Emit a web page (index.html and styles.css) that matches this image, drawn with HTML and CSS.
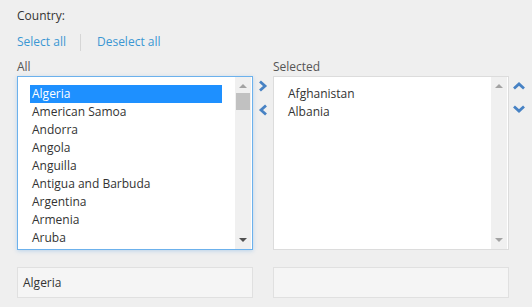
FILE: index.html
```html
<!DOCTYPE html>
<html lang="en">
<head>
    <meta charset="UTF-8">
    <meta name="viewport" content="width=device-width, initial-scale=1.0">
    <title>Country picker</title>
    <link rel="stylesheet" href="styles.css">
</head>
<body>
    <div class="field">
        <div class="field-label">Country:</div>
        <div class="bulk-links">
            <a href="#" class="link">Select all</a>
            <span class="divider"></span>
            <a href="#" class="link">Deselect all</a>
        </div>
        <div class="picker">
            <div class="pane">
                <div class="pane-label">All</div>
                <div class="listbox focused">
                    <ul class="options">
                        <li class="option selected">Algeria</li>
                        <li class="option">American Samoa</li>
                        <li class="option">Andorra</li>
                        <li class="option">Angola</li>
                        <li class="option">Anguilla</li>
                        <li class="option">Antigua and Barbuda</li>
                        <li class="option">Argentina</li>
                        <li class="option">Armenia</li>
                        <li class="option">Aruba</li>
                    </ul>
                    <div class="scrollbar">
                        <span class="arrow up"></span>
                        <span class="thumb"></span>
                        <span class="arrow down dark"></span>
                    </div>
                </div>
                <div class="summary">Algeria</div>
            </div>

            <div class="move-buttons">
                <button class="icon-btn" title="Add">
                    <svg width="10" height="12" viewBox="0 0 10 12"><path d="M2 1.5 L7 6 L2 10.5" fill="none" stroke="#4782c4" stroke-width="2.8"/></svg>
                </button>
                <button class="icon-btn" title="Remove">
                    <svg width="10" height="12" viewBox="0 0 10 12"><path d="M8 1.5 L3 6 L8 10.5" fill="none" stroke="#4782c4" stroke-width="2.8"/></svg>
                </button>
            </div>

            <div class="pane">
                <div class="pane-label">Selected</div>
                <div class="listbox">
                    <ul class="options">
                        <li class="option">Afghanistan</li>
                        <li class="option">Albania</li>
                    </ul>
                    <div class="scrollbar">
                        <span class="arrow up"></span>
                        <span class="arrow down"></span>
                    </div>
                </div>
                <div class="summary"></div>
            </div>

            <div class="order-buttons">
                <button class="icon-btn" title="Move up">
                    <svg width="12" height="8" viewBox="0 0 12 8"><path d="M1 6.5 L6 2 L11 6.5" fill="none" stroke="#4782c4" stroke-width="2.8"/></svg>
                </button>
                <button class="icon-btn" title="Move down">
                    <svg width="12" height="8" viewBox="0 0 12 8"><path d="M1 1.5 L6 6 L11 1.5" fill="none" stroke="#4782c4" stroke-width="2.8"/></svg>
                </button>
            </div>
        </div>
    </div>
</body>
</html>
```

FILE: styles.css
```css
body {
    font-family: "Open Sans", Arial, sans-serif;
    font-size: 12px;
    background-color: #efefef;
    color: #333;
    margin: 0;
    padding: 0;
}

.field {
    padding: 7px 0 0 17px;
}

.field-label {
    line-height: 18px;
}

.bulk-links {
    display: flex;
    align-items: center;
    margin-top: 8px;
    height: 18px;
}

.link {
    color: #3b97d3;
    text-decoration: none;
    line-height: 18px;
}

.divider {
    width: 0;
    height: 17px;
    border-left: 1px solid #d6d6d6;
    margin: 0 16px 0 14px;
}

.picker {
    display: flex;
    margin-top: 7px;
}

.pane {
    width: 236px;
}

.pane-label {
    line-height: 18px;
    color: #555;
}

.listbox {
    display: flex;
    height: 174px;
    box-sizing: border-box;
    background-color: #fff;
    border: 1px solid #dcdcdc;
    overflow: hidden;
}

.listbox.focused {
    border-color: #6cb1ec;
    box-shadow: 0 1px 4px rgba(90, 160, 225, 0.35);
}

.options {
    flex: 1;
    list-style: none;
    margin: 0;
    padding: 8px 13px 0 12px;
}

.option {
    line-height: 18px;
    padding-left: 2px;
    white-space: nowrap;
}

.option.selected {
    background-color: #1e90ff;
    color: #fff;
}

.scrollbar {
    position: relative;
    width: 16px;
    margin-right: 1px;
    background-color: #f0f0f0;
}

.arrow {
    position: absolute;
    left: 4px;
    width: 0;
    height: 0;
    border-left: 4px solid transparent;
    border-right: 4px solid transparent;
}

.arrow.up {
    top: 7px;
    border-bottom: 4px solid #a3a3a3;
}

.arrow.down {
    bottom: 7px;
    border-top: 4px solid #a3a3a3;
}

.arrow.down.dark {
    border-top-color: #505050;
}

.thumb {
    position: absolute;
    top: 16px;
    left: 1px;
    width: 14px;
    height: 17px;
    background-color: #c1c1c1;
}

.summary {
    height: 31px;
    box-sizing: border-box;
    margin-top: 17px;
    padding-left: 5px;
    line-height: 29px;
    background-color: #f5f5f5;
    border: 1px solid #e0e0e0;
}

.move-buttons,
.order-buttons {
    display: flex;
    flex-direction: column;
    padding-top: 22px;
}

.move-buttons {
    width: 20px;
    align-items: center;
    gap: 12px;
}

.order-buttons {
    padding-left: 4px;
    padding-top: 24px;
    gap: 15px;
}

.icon-btn {
    display: block;
    padding: 0;
    border: none;
    background: none;
    cursor: pointer;
    line-height: 0;
}
```
